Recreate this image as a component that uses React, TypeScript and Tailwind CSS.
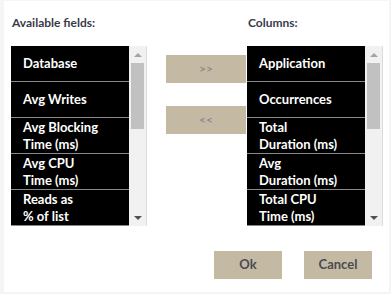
import React from "react";

const available: string[][] = [
  ["Database"],
  ["Avg Writes"],
  ["Avg Blocking", "Time (ms)"],
  ["Avg CPU", "Time (ms)"],
  ["Reads as", "% of list"],
];

const columns: string[][] = [
  ["Application"],
  ["Occurrences"],
  ["Total", "Duration (ms)"],
  ["Avg", "Duration (ms)"],
  ["Total CPU", "Time (ms)"],
];

function FieldList({ items }: { items: string[][] }) {
  return (
    <div className="flex h-[180px] w-[136px]">
      <div className="w-[118px] h-full overflow-hidden bg-black">
        {items.map((lines, i) => (
          <div
            key={i}
            className="h-9 flex items-center pl-3 border-b border-[#8a8a8a] text-white text-[13px] font-bold leading-[17px]"
          >
            <div>
              {lines.map((l, j) => (
                <div key={j}>{l}</div>
              ))}
            </div>
          </div>
        ))}
      </div>
      {/* scrollbar */}
      <div className="w-[18px] h-full bg-[#f1f1f1] border-r border-[#dcdcdc] flex flex-col">
        <div className="h-[17px] flex items-center justify-center">
          <div className="w-0 h-0 border-l-[4px] border-r-[4px] border-b-[4px] border-l-transparent border-r-transparent border-b-[#a3a3a3]" />
        </div>
        <div className="mx-[2px] h-[66px] bg-[#c1c1c1]" />
        <div className="flex-1" />
        <div className="h-[17px] flex items-center justify-center">
          <div className="w-0 h-0 border-l-[4px] border-r-[4px] border-t-[4px] border-l-transparent border-r-transparent border-t-[#505050]" />
        </div>
      </div>
    </div>
  );
}

export default function App() {
  return (
    <div
      className="w-[391px] h-[294px] bg-[#f5f5f5] pl-1 pt-px pr-0.5 pb-0.5"
      style={{ fontFamily: "Lato, 'Open Sans', sans-serif" }}
    >
      <div className="h-full bg-white pl-[7px] pt-[13px]">
        <div className="flex">
          <div className="w-[136px]">
            <div className="h-[32px] pl-px text-[12px] font-bold text-[#3a3a4a]">
              Available fields:
            </div>
            <FieldList items={available} />
          </div>
          <div className="ml-[19px] w-[80px] pt-[41px] flex flex-col gap-[23px]">
            <button className="h-[28px] w-[80px] bg-[#c4baa4] text-[#8e8e8e] text-[12px] font-bold">
              &gt;&gt;
            </button>
            <button className="h-[28px] w-[80px] bg-[#c4baa4] text-[#8e8e8e] text-[12px] font-bold">
              &lt;&lt;
            </button>
          </div>
          <div className="ml-px w-[136px]">
            <div className="h-[32px] pl-px text-[12px] font-bold text-[#3a3a4a]">
              Columns:
            </div>
            <FieldList items={columns} />
          </div>
        </div>
        <div className="flex justify-end gap-[22px] pr-[17px] mt-[25px]">
          <button className="h-[28px] w-[68px] bg-[#c4baa4] text-[#4a4a50] text-[13px] font-bold">
            Ok
          </button>
          <button className="h-[28px] w-[68px] bg-[#c4baa4] text-[#4a4a50] text-[13px] font-bold">
            Cancel
          </button>
        </div>
      </div>
    </div>
  );
}
